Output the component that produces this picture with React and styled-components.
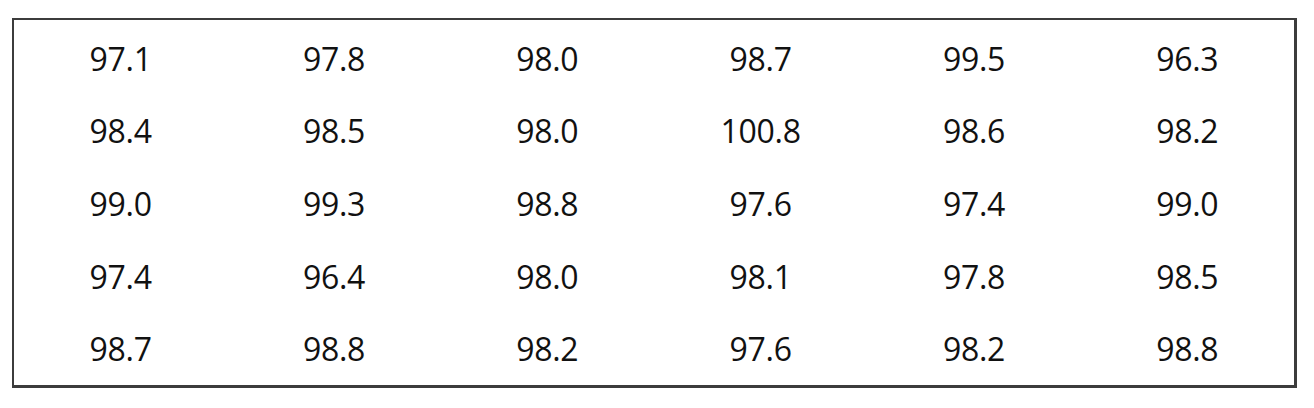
import React from "react";
import styled, { createGlobalStyle } from "styled-components";

const GlobalStyle = createGlobalStyle`
  html, body {
    margin: 0;
    padding: 0;
    background: #ffffff;
  }
`;

const Page = styled.div`
  padding: 18px 0 0 12px;
`;

const Table = styled.div`
  box-sizing: border-box;
  width: 1285px;
  height: 370px;
  border: 2px solid #3c3c3c;
  border-right-width: 3px;
  border-bottom-width: 3px;
  display: grid;
  grid-template-columns: repeat(6, 1fr);
  grid-template-rows: repeat(5, 1fr);
  padding: 2px 0 0 0;
`;

const Cell = styled.div`
  display: flex;
  align-items: center;
  justify-content: center;
  font-family: "Open Sans", "Liberation Sans", sans-serif;
  font-size: 32px;
  color: #111111;
  letter-spacing: -0.3px;
`;

const rows = [
  ["97.1", "97.8", "98.0", "98.7", "99.5", "96.3"],
  ["98.4", "98.5", "98.0", "100.8", "98.6", "98.2"],
  ["99.0", "99.3", "98.8", "97.6", "97.4", "99.0"],
  ["97.4", "96.4", "98.0", "98.1", "97.8", "98.5"],
  ["98.7", "98.8", "98.2", "97.6", "98.2", "98.8"],
];

const App = () => (
  <>
    <GlobalStyle />
    <Page>
      <Table>
        {rows.map((row, r) =>
          row.map((value, c) => <Cell key={`${r}-${c}`}>{value}</Cell>)
        )}
      </Table>
    </Page>
  </>
);

export default App;
